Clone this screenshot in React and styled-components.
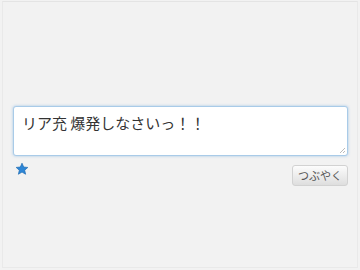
import React from 'react'
import styled, {createGlobalStyle} from 'styled-components'

const Global = createGlobalStyle`
html, body {
  margin: 0;
  padding: 0;
  background: #f2f2f2;
}
body {
  font-family: "Noto Sans CJK JP", "Liberation Sans", sans-serif;
}
`

const Frame = styled.div`
box-sizing: border-box;
width: 360px;
height: 270px;
padding: 1px 2px 2px 2px;
`

const Inner = styled.div`
box-sizing: border-box;
height: 100%;
border: 1px solid #e9e9e9;
border-top-color: #e4e4e4;
padding: 104px 9px 0 10px;
display: flex;
flex-direction: column;
`

const TextArea = styled.div`
box-sizing: border-box;
height: 50px;
background: #fff;
border: 1px solid #a9cbe8;
border-radius: 3px;
box-shadow: 0 0 3px rgba(110, 170, 225, 0.6);
padding: 6px 8px;
font-size: 15px;
line-height: 20px;
color: #333;
position: relative;
`

const Grip = styled.svg`
position: absolute;
right: 1px;
bottom: 1px;
`

const Footer = styled.div`
display: flex;
justify-content: space-between;
align-items: flex-start;
margin-top: 6px;
padding-left: 2px;
`

const Button = styled.button`
box-sizing: border-box;
height: 21px;
padding: 0 5px;
margin-top: 3px;
border: 1px solid #d2d2d2;
border-radius: 3px;
background: linear-gradient(#fcfcfc, #dedede);
font-family: "Noto Sans CJK JP", sans-serif;
font-size: 11px;
line-height: 19px;
color: #555;
`

export default function App() {
  return (
    <Frame>
      <Global/>
      <Inner>
        <TextArea>
          リア充 爆発しなさいっ！！
          <Grip width="7" height="7" viewBox="0 0 7 7">
            <path d="M6 1 L1 6 M6 4 L4 6" stroke="#bbb" strokeWidth="1"/>
          </Grip>
        </TextArea>
        <Footer>
          <svg width="14" height="14" viewBox="0 0 24 24">
            <path d="M12 2 L14.9 8.6 L22 9.3 L16.6 14 L18.2 21 L12 17.3 L5.8 21 L7.4 14 L2 9.3 L9.1 8.6 Z"
                  fill="#2d86d6" stroke="#1f6db5" strokeWidth="1.2" strokeLinejoin="round"/>
          </svg>
          <Button>つぶやく</Button>
        </Footer>
      </Inner>
    </Frame>
  )
}
